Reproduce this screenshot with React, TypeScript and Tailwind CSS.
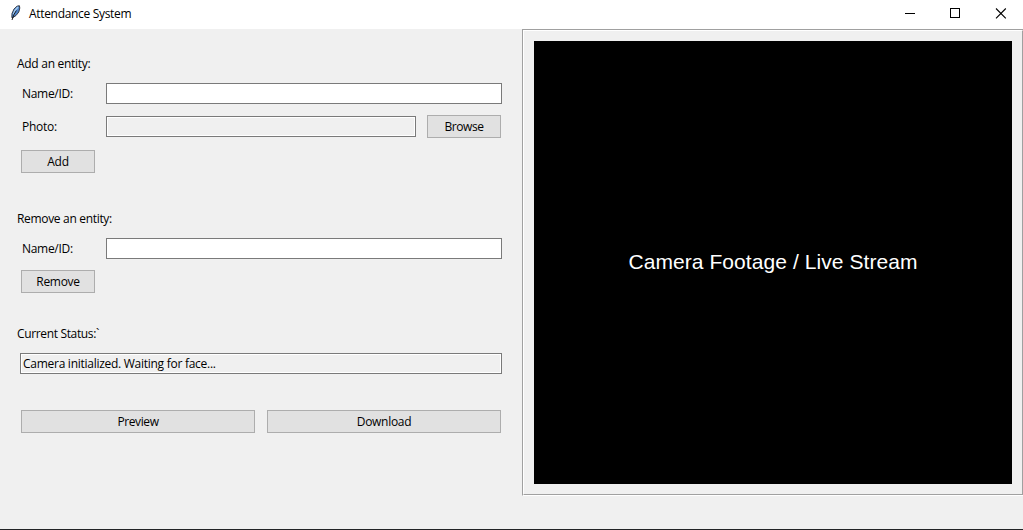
import type { ReactNode } from 'react';

function Button({ className, children }: { className: string; children: ReactNode }) {
  return (
    <button
      type="button"
      className={`flex h-[23px] shrink-0 items-center justify-center border border-[#adadad] bg-[#e1e1e1] ${className}`}
    >
      {children}
    </button>
  );
}

function Feather() {
  return (
    <svg className="ml-[10px] h-4 w-[11px] shrink-0" viewBox="0 0 11 16" fill="none">
      <path d="M1.8 12.5 2 8.5 4 4 7 1.2 9.4.7 9.8 3 8.8 7 6 10.5 3 12.5Z" fill="#4f86cc" stroke="#2a2e36" strokeWidth=".9" />
      <path d="M3.4 9.5 5 5.5 8 2" stroke="#a5caee" strokeWidth="1.5" />
      <path d="M6.4 5.5 4.2 9 2 15" stroke="#111" strokeWidth=".9" />
    </svg>
  );
}

function TitleBar() {
  return (
    <header className="flex h-[29px] items-center bg-white pb-[3px]">
      <Feather />
      <span className="ml-2 pt-[2px] tracking-[-0.32px]">Attendance System</span>
      <div className="ml-auto flex items-center pr-4">
        <svg className="h-[11px] w-[11px]" viewBox="0 0 11 11" shapeRendering="crispEdges">
          <path d="M0 5.5H10" stroke="#000" />
        </svg>
        <svg className="ml-[34px] h-[11px] w-[11px]" viewBox="0 0 11 11" fill="none" shapeRendering="crispEdges">
          <path d="M.5 .5H9.5V9.5H.5Z" stroke="#000" />
        </svg>
        <svg className="ml-[35px] h-[11px] w-[11px] overflow-visible" viewBox="0 0 11 11">
          <path d="M0 .5 9.8 10.3M9.8 .5 0 10.3" stroke="#000" strokeWidth="1.1" />
        </svg>
      </div>
    </header>
  );
}

export default function App() {
  return (
    <div className="flex h-[530px] w-[1023px] flex-col overflow-hidden border-b border-[#222426] bg-[#f0f0f0] font-['Open_Sans',sans-serif] text-[12px] leading-[16px] text-black">
      <TitleBar />
      <main className="flex flex-1 items-start">
        <section className="flex w-[522px] flex-col pr-5 pt-[27px]">
          <h2 className="ml-[17px] h-4 tracking-[-0.28px]">Add an entity:</h2>
          <label className="mt-[11px] flex h-[21px] items-center">
            <span className="w-[106px] pl-[22px] tracking-[-0.3px]">Name/ID:</span>
            <input className="h-[21px] w-[396px] border border-[#7a7a7a] bg-white px-1 outline-none" />
          </label>
          <div className="mt-[11px] flex h-[23px] items-center">
            <span className="w-[106px] pl-[22px] tracking-[-0.28px]">Photo:</span>
            <input readOnly className="h-[21px] w-[310px] border border-[#7a7a7a] bg-[#f0f0f0] px-1 outline-none inset-ring inset-ring-white" />
            <Button className="ml-[11px] w-[74px] tracking-[-0.42px]">Browse</Button>
          </div>
          <Button className="ml-[21px] mt-3 w-[74px] tracking-[-0.2px]">Add</Button>

          <h2 className="ml-[17px] mt-[38px] h-4 tracking-[-0.32px]">Remove an entity:</h2>
          <label className="mt-[11px] flex h-[21px] items-center">
            <span className="w-[106px] pl-[22px] tracking-[-0.3px]">Name/ID:</span>
            <input className="h-[21px] w-[396px] border border-[#7a7a7a] bg-white px-1 outline-none" />
          </label>
          <Button className="ml-[21px] mt-[11px] w-[74px] tracking-[-0.3px]">Remove</Button>

          <h2 className="ml-[17px] mt-[33px] h-4 tracking-[-0.35px]">Current Status:`</h2>
          <div className="ml-5 mt-[11px] flex h-[21px] w-[482px] items-center border border-[#7a7a7a] pl-[2px] tracking-[-0.27px] inset-ring inset-ring-white">
            Camera initialized. Waiting for face...
          </div>
          <div className="ml-[21px] mt-9 flex gap-3">
            <Button className="w-[234px] tracking-[-0.4px]">Preview</Button>
            <Button className="w-[234px] tracking-[-0.3px]">Download</Button>
          </div>
        </section>

        <section className="h-[467px] w-[501px] border-b border-l border-t border-b-white border-l-[#a0a0a0] border-t-[#a0a0a0]">
          <div className="h-full border border-b-[#a0a0a0] border-l-white border-r-[#a0a0a0] border-t-white pl-[10px] pt-[10px]">
            <div className="flex h-[443px] w-[478px] items-center justify-center bg-black pb-[2px] font-['Liberation_Sans',sans-serif] text-[21px] leading-6 tracking-[0.07px] text-white">
              Camera Footage / Live Stream
            </div>
          </div>
        </section>
      </main>
    </div>
  );
}
